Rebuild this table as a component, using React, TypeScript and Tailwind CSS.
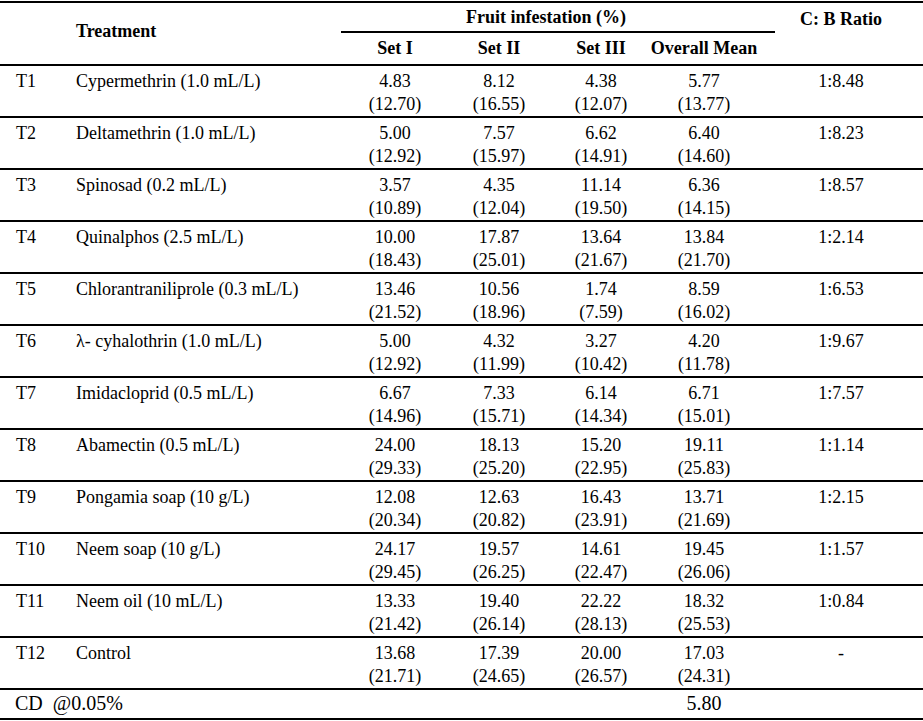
type Row = {
  id: string;
  name: string;
  sets: [string, string][];
  ratio: string;
};

const rows: Row[] = [
  { id: 'T1', name: 'Cypermethrin (1.0 mL/L)', sets: [['4.83', '(12.70)'], ['8.12', '(16.55)'], ['4.38', '(12.07)'], ['5.77', '(13.77)']], ratio: '1:8.48' },
  { id: 'T2', name: 'Deltamethrin (1.0 mL/L)', sets: [['5.00', '(12.92)'], ['7.57', '(15.97)'], ['6.62', '(14.91)'], ['6.40', '(14.60)']], ratio: '1:8.23' },
  { id: 'T3', name: 'Spinosad (0.2 mL/L)', sets: [['3.57', '(10.89)'], ['4.35', '(12.04)'], ['11.14', '(19.50)'], ['6.36', '(14.15)']], ratio: '1:8.57' },
  { id: 'T4', name: 'Quinalphos (2.5 mL/L)', sets: [['10.00', '(18.43)'], ['17.87', '(25.01)'], ['13.64', '(21.67)'], ['13.84', '(21.70)']], ratio: '1:2.14' },
  { id: 'T5', name: 'Chlorantraniliprole (0.3 mL/L)', sets: [['13.46', '(21.52)'], ['10.56', '(18.96)'], ['1.74', '(7.59)'], ['8.59', '(16.02)']], ratio: '1:6.53' },
  { id: 'T6', name: 'λ- cyhalothrin (1.0 mL/L)', sets: [['5.00', '(12.92)'], ['4.32', '(11.99)'], ['3.27', '(10.42)'], ['4.20', '(11.78)']], ratio: '1:9.67' },
  { id: 'T7', name: 'Imidacloprid (0.5 mL/L)', sets: [['6.67', '(14.96)'], ['7.33', '(15.71)'], ['6.14', '(14.34)'], ['6.71', '(15.01)']], ratio: '1:7.57' },
  { id: 'T8', name: 'Abamectin (0.5 mL/L)', sets: [['24.00', '(29.33)'], ['18.13', '(25.20)'], ['15.20', '(22.95)'], ['19.11', '(25.83)']], ratio: '1:1.14' },
  { id: 'T9', name: 'Pongamia soap (10 g/L)', sets: [['12.08', '(20.34)'], ['12.63', '(20.82)'], ['16.43', '(23.91)'], ['13.71', '(21.69)']], ratio: '1:2.15' },
  { id: 'T10', name: 'Neem soap (10 g/L)', sets: [['24.17', '(29.45)'], ['19.57', '(26.25)'], ['14.61', '(22.47)'], ['19.45', '(26.06)']], ratio: '1:1.57' },
  { id: 'T11', name: 'Neem oil (10 mL/L)', sets: [['13.33', '(21.42)'], ['19.40', '(26.14)'], ['22.22', '(28.13)'], ['18.32', '(25.53)']], ratio: '1:0.84' },
  { id: 'T12', name: 'Control', sets: [['13.68', '(21.71)'], ['17.39', '(24.65)'], ['20.00', '(26.57)'], ['17.03', '(24.31)']], ratio: '-' },
];

const cols = 'grid grid-cols-[76px_265px_108px_100px_104px_122px_148px]';

export default function App(): React.JSX.Element {
  return (
    <main className="min-h-screen w-[923px] bg-white pt-[1px] font-['Liberation_Serif',serif] text-[18px] leading-[23px] text-black">
      <div className="border-t-2 border-black">
        {/* header */}
        <div className={`${cols} grid-rows-[30px_31px] border-b-2 border-black font-bold`}>
          <div className="row-span-2" />
          <div className="row-span-2 flex items-center pb-[5px]">Treatment</div>
          <div className="col-span-4 flex items-center justify-center border-b-2 border-black pr-[24px]">
            Fruit infestation (%)
          </div>
          <div className="flex items-center justify-center pr-[16px] pt-[2px]">C: B Ratio</div>
          <div className="col-start-3 flex items-center justify-center">Set I</div>
          <div className="flex items-center justify-center">Set II</div>
          <div className="flex items-center justify-center">Set III</div>
          <div className="flex items-center justify-center whitespace-nowrap pr-[20px]">Overall Mean</div>
        </div>

        {/* rows */}
        {rows.map((row) => (
          <div key={row.id} className={`${cols} h-[52px] border-b-2 border-black pt-[4px]`}>
            <div className="pl-[16px]">{row.id}</div>
            <div className="whitespace-nowrap">{row.name}</div>
            {row.sets.map(([mean, angle], i) => (
              <div key={i} className={`flex flex-col items-center ${i === 3 ? 'pr-[20px]' : ''}`}>
                <span>{mean}</span>
                <span>{angle}</span>
              </div>
            ))}
            <div className="flex justify-center pr-[16px]">{row.ratio}</div>
          </div>
        ))}

        {/* critical difference */}
        <div className={`${cols} h-[30px] border-b-2 border-black pt-[1px] text-[20px] leading-[24px]`}>
          <div className="col-span-5 whitespace-pre pl-[15px]">CD  @0.05%</div>
          <div className="flex justify-center pr-[20px]">5.80</div>
        </div>
      </div>
    </main>
  );
}
